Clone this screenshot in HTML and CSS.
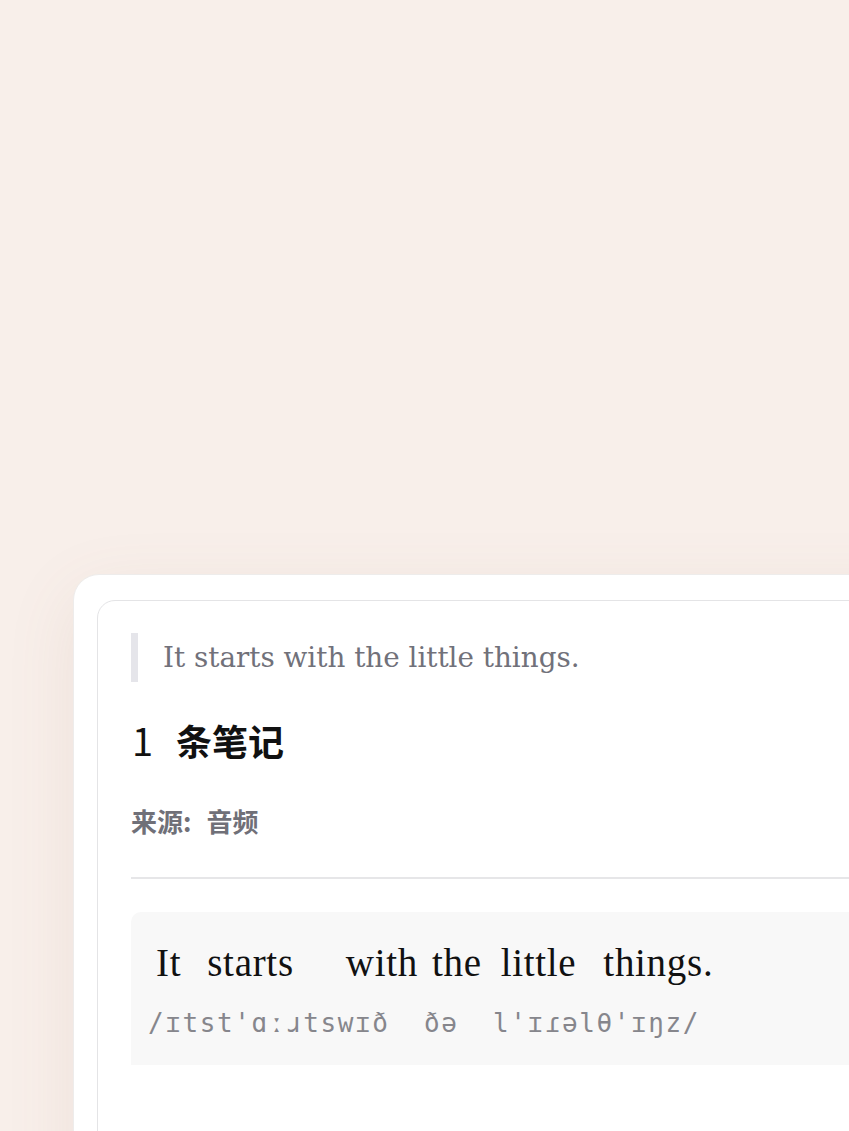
FILE: index.html
```html
<!DOCTYPE html>
<html lang="zh-CN">
<head>
<meta charset="utf-8">
<title>笔记</title>
<link rel="stylesheet" href="styles.css">
</head>
<body>
<div class="page">
  <div class="shell">
    <div class="panel">
      <blockquote class="quote">It starts with the little things.</blockquote>
      <h2 class="count"><span class="num">1</span><span class="label">条笔记</span></h2>
      <p class="source"><span class="src-key">来源:</span><span class="src-val">音频</span></p>
      <hr class="divider">
      <div class="note">
        <div class="words">
          <span class="w w1">It</span><span class="w w2">starts</span><span class="w w3">with</span><span class="w w4">the</span><span class="w w5">little</span><span class="w w6">things.</span>
        </div>
        <div class="ipa">/ɪtst'ɑːɹtswɪð  ðə  l'ɪɾəlθ'ɪŋz/</div>
      </div>
    </div>
  </div>
</div>
</body>
</html>
```
FILE: styles.css
```css
html, body {
  margin: 0;
  padding: 0;
}
body {
  background: #f8efea;
  overflow: hidden;
  height: 1131px;
  font-family: "Noto Sans CJK SC", "Noto Sans", sans-serif;
}
.page {
  padding: 574px 0 0 73px;
}
.shell {
  width: 900px;
  height: 700px;
  background: #ffffff;
  border: 1px solid #eeeceb;
  border-radius: 26px;
  box-shadow: 0 20px 70px rgba(150, 110, 90, 0.10);
  padding: 25px 0 0 23px;
  box-sizing: border-box;
}
.panel {
  height: 100%;
  background: #ffffff;
  border: 1px solid #e4e4e6;
  border-radius: 18px;
  padding: 32px 0 0 33px;
  box-sizing: border-box;
}
.quote {
  margin: 0;
  border-left: 7px solid #e5e5ea;
  padding: 6px 0 6px 25px;
  height: 49px;
  box-sizing: border-box;
  font-family: "DejaVu Serif", Georgia, serif;
  font-size: 27.8px;
  line-height: 37px;
  color: #71717a;
  display: flex;
  align-items: center;
}
.count {
  margin: 30px 0 0 0;
  display: flex;
  align-items: center;
  height: 56px;
  font-size: 36px;
  line-height: 56px;
  color: #111111;
}
.num {
  font-weight: 400;
  font-size: 38px;
  margin-left: 1px;
  margin-right: 23px;
}
.label {
  font-weight: 700;
}
.source {
  margin: 35px 0 0 0;
  font-size: 26px;
  line-height: 36px;
  font-weight: 700;
  color: #707078;
  display: flex;
}
.src-key {
  margin-right: 15px;
}
.divider {
  margin: 38px 0 0 0;
  border: 0;
  border-top: 2px solid #e6e6e8;
  height: 0;
}
.note {
  margin-top: 33px;
  background: #f8f8f8;
  border-radius: 10px 0 0 0;
  height: 153px;
  padding: 29px 0 0 17px;
  box-sizing: border-box;
}
.words {
  display: flex;
  font-family: "Liberation Serif", "Times New Roman", serif;
  font-size: 39px;
  letter-spacing: 0.7px;
  line-height: 44px;
  color: #111111;
  padding-left: 8px;
}
.w1 { margin-right: 26px; }
.w2 { margin-right: 52px; }
.w3 { margin-right: 14px; }
.w4 { margin-right: 19px; }
.w5 { margin-right: 27px; }
.ipa {
  margin-top: 20px;
  font-family: "DejaVu Sans Mono", "Liberation Mono", monospace;
  font-size: 26px;
  letter-spacing: 1.6px;
  line-height: 36px;
  color: #86868c;
  white-space: pre;
}
```
